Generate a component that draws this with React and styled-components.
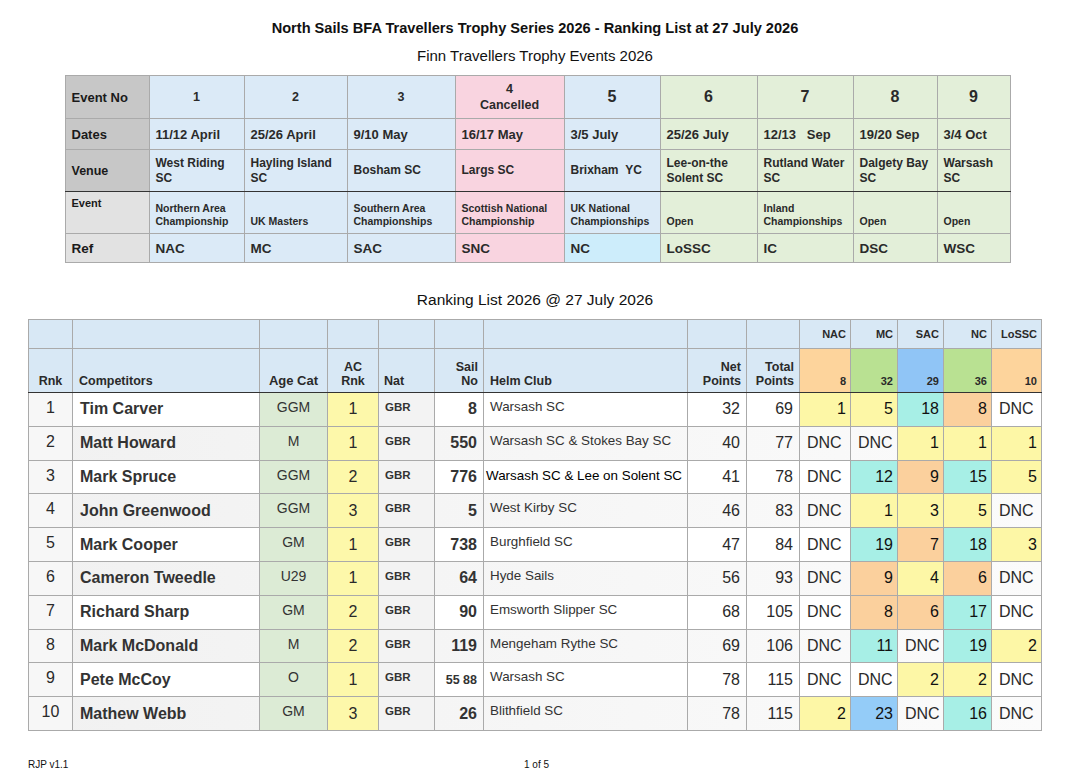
import React from 'react';
import styled, { createGlobalStyle } from 'styled-components';

const GlobalStyle = createGlobalStyle`
  html, body {
    margin: 0;
    padding: 0;
    background: #ffffff;
  }
  body {
    font-family: "Liberation Sans", Arial, Helvetica, sans-serif;
    color: #222;
  }
`;

const events = [
  { no: '1', big: false, date: '11/12 April', venue: 'West Riding SC', event: 'Northern Area Championship', ref: 'NAC', bg: '#dbeaf7' },
  { no: '2', big: false, date: '25/26 April', venue: 'Hayling Island SC', event: 'UK Masters', ref: 'MC', bg: '#dbeaf7' },
  { no: '3', big: false, date: '9/10 May', venue: 'Bosham SC', event: 'Southern Area Championships', ref: 'SAC', bg: '#dbeaf7' },
  { no: '4', cancelled: true, big: false, date: '16/17 May', venue: 'Largs SC', event: 'Scottish National Championship', ref: 'SNC', bg: '#f9d4e0' },
  { no: '5', big: true, date: '3/5 July', venue: 'Brixham\u00a0\u00a0YC', event: 'UK National Championships', ref: 'NC', bg: '#dbeaf7', refBg: '#cdedfb' },
  { no: '6', big: true, date: '25/26 July', venue: 'Lee-on-the Solent SC', event: 'Open', ref: 'LoSSC', bg: '#e3efd9' },
  { no: '7', big: true, date: '12/13\u00a0\u00a0\u00a0Sep', venue: 'Rutland Water SC', event: 'Inland Championships', ref: 'IC', bg: '#e3efd9' },
  { no: '8', big: true, date: '19/20 Sep', venue: 'Dalgety Bay SC', event: 'Open', ref: 'DSC', bg: '#e3efd9' },
  { no: '9', big: true, date: '3/4 Oct', venue: 'Warsash SC', event: 'Open', ref: 'WSC', bg: '#e3efd9' },
];

const eventCols = [84, 95, 103, 108, 109, 96, 97, 96, 84, 73];

const Y = '#fdf7a6';
const T = '#a7efe6';
const O = '#fbd09d';
const B = '#94ccf8';

const scoreHeads = [
  { ref: 'NAC', pts: '8', bg: '#fdd49c' },
  { ref: 'MC', pts: '32', bg: '#b9e192' },
  { ref: 'SAC', pts: '29', bg: '#90c5f6' },
  { ref: 'NC', pts: '36', bg: '#b9e192' },
  { ref: 'LoSSC', pts: '10', bg: '#fdd49c' },
];

const competitors = [
  { rnk: 1, name: 'Tim Carver', age: 'GGM', ac: 1, sail: '8', club: 'Warsash SC', net: 32, total: 69, scores: [[1, Y], [5, Y], [18, T], [8, O], ['DNC']] },
  { rnk: 2, name: 'Matt Howard', age: 'M', ac: 1, sail: '550', club: 'Warsash SC & Stokes Bay SC', net: 40, total: 77, scores: [['DNC'], ['DNC'], [1, Y], [1, Y], [1, Y]] },
  { rnk: 3, name: 'Mark Spruce', age: 'GGM', ac: 2, sail: '776', club: 'Warsash SC & Lee on Solent SC', wide: true, net: 41, total: 78, scores: [['DNC'], [12, T], [9, O], [15, T], [5, Y]] },
  { rnk: 4, name: 'John Greenwood', age: 'GGM', ac: 3, sail: '5', club: 'West Kirby SC', net: 46, total: 83, scores: [['DNC'], [1, Y], [3, Y], [5, Y], ['DNC']] },
  { rnk: 5, name: 'Mark Cooper', age: 'GM', ac: 1, sail: '738', club: 'Burghfield SC', net: 47, total: 84, scores: [['DNC'], [19, T], [7, O], [18, T], [3, Y]] },
  { rnk: 6, name: 'Cameron Tweedle', age: 'U29', ac: 1, sail: '64', club: 'Hyde Sails', net: 56, total: 93, scores: [['DNC'], [9, O], [4, Y], [6, O], ['DNC']] },
  { rnk: 7, name: 'Richard Sharp', age: 'GM', ac: 2, sail: '90', club: 'Emsworth Slipper SC', net: 68, total: 105, scores: [['DNC'], [8, O], [6, O], [17, T], ['DNC']] },
  { rnk: 8, name: 'Mark McDonald', age: 'M', ac: 2, sail: '119', club: 'Mengeham Rythe SC', net: 69, total: 106, scores: [['DNC'], [11, T], ['DNC'], [19, T], [2, Y]] },
  { rnk: 9, name: 'Pete McCoy', age: 'O', ac: 1, sail: '55 88', small: true, club: 'Warsash SC', net: 78, total: 115, scores: [['DNC'], ['DNC'], [2, Y], [2, Y], ['DNC']] },
  { rnk: 10, name: 'Mathew Webb', age: 'GM', ac: 3, sail: '26', club: 'Blithfield SC', net: 78, total: 115, scores: [[2, Y], [23, B], ['DNC'], [16, T], ['DNC']] },
];

const rankCols = [44, 187, 68, 51, 56, 49, 204, 59, 53, 51, 47, 46, 48, 50];

const Page = styled.div`
  width: 1070px;
  height: 776px;
  box-sizing: border-box;
  padding-top: 19px;
  display: flex;
  flex-direction: column;
  align-items: center;
  position: relative;
`;

const Title = styled.h1`
  margin: 0;
  font-size: 14.6px;
  font-weight: 700;
  color: #111;
  line-height: 18px;
`;

const Subtitle = styled.h2`
  margin: 10px 0 0;
  font-size: 15px;
  font-weight: 400;
  color: #111;
  line-height: 18px;
`;

const EventsTable = styled.table`
  margin-top: 10px;
  margin-left: 5px;
  border-collapse: collapse;
  table-layout: fixed;
  width: 945px;
`;

const ERow = styled.tr`
  height: ${p => p.$h}px;
  border-bottom: 1px solid ${p => (p.$dark ? '#333' : '#aaa')};
`;

const ELabel = styled.th`
  background: ${p => (p.$light ? '#e2e2e2' : '#c7c7c7')};
  border: 1px solid #aaa;
  border-bottom-color: inherit;
  text-align: left;
  vertical-align: ${p => p.$valign || 'middle'};
  padding: ${p => (p.$valign === 'top' ? '5px 6px 0' : '0 6px')};
  font-size: ${p => p.$size || 13}px;
  font-weight: 700;
  color: #1a1a1a;
`;

const ECell = styled.td`
  background: ${p => p.$bg};
  border: 1px solid #aaa;
  border-bottom-color: inherit;
  text-align: ${p => (p.$center ? 'center' : 'left')};
  vertical-align: ${p => p.$valign || 'middle'};
  padding: ${p => p.$pad || '0 6px'};
  font-size: ${p => p.$size}px;
  font-weight: 700;
  line-height: ${p => p.$lh || 'normal'};
  color: #2a2a2a;
`;

const SectionTitle = styled.h3`
  margin: 28px 0 0;
  font-size: 15.5px;
  font-weight: 400;
  color: #111;
  line-height: 18px;
`;

const RankTable = styled.table`
  margin-top: 10px;
  margin-left: 0;
  border-collapse: collapse;
  table-layout: fixed;
  width: 1013px;
`;

const HeadRow = styled.tr`
  height: ${p => p.$h}px;
  border-bottom: 1px solid ${p => (p.$dark ? '#333' : '#aaa')};
`;

const HeadCell = styled.th`
  background: ${p => p.$bg || '#d8e8f5'};
  border: 1px solid #aaa;
  border-bottom-color: inherit;
  text-align: ${p => p.$align || 'left'};
  vertical-align: ${p => p.$valign || 'bottom'};
  padding: ${p => p.$pad || '0 5px 4px'};
  font-size: ${p => p.$size || 12.5}px;
  font-weight: 700;
  line-height: 14px;
  color: #2a2a2a;
  white-space: nowrap;
`;

const BodyRow = styled.tr`
  height: 33.8px;
  background: ${p => (p.$alt ? 'linear-gradient(90deg, #f1f1f1, #fbfbfb)' : '#ffffff')};
`;

const BodyCell = styled.td`
  background: ${p => p.$bg || 'transparent'};
  border: 1px solid #aaa;
  ${p => p.$darkLeft && 'border-left: 1px solid #333;'}
  text-align: ${p => p.$align || 'left'};
  vertical-align: ${p => p.$valign || 'middle'};
  padding: ${p => p.$pad || '0 5px'};
  font-size: ${p => p.$size || 16}px;
  font-weight: ${p => (p.$bold ? 700 : 400)};
  color: ${p => p.$color || '#2a2a2a'};
  white-space: nowrap;
  overflow: visible;
`;

const Footer = styled.div`
  position: absolute;
  left: 28px;
  right: 0;
  top: 759px;
  font-size: 10px;
  color: #111;
  display: grid;
  grid-template-columns: 496px auto;
`;

const EventNo = ({ e }) =>
  e.cancelled ? (
    <ECell $bg={e.bg} $center $size={12.5} $lh="16px">4<br />Cancelled</ECell>
  ) : (
    <ECell $bg={e.bg} $center $size={e.big ? 16 : 12.5}>{e.no}</ECell>
  );

const App = () => (
  <>
    <GlobalStyle />
    <Page>
      <Title>North Sails BFA Travellers Trophy Series 2026 - Ranking List at 27 July 2026</Title>
      <Subtitle>Finn Travellers Trophy Events 2026</Subtitle>

      <EventsTable>
        <colgroup>
          {eventCols.map((w, i) => <col key={i} style={{ width: w }} />)}
        </colgroup>
        <tbody>
          <ERow $h={43}>
            <ELabel $size={13}>Event No</ELabel>
            {events.map(e => <EventNo key={e.no} e={e} />)}
          </ERow>
          <ERow $h={31}>
            <ELabel $size={13}>Dates</ELabel>
            {events.map(e => <ECell key={e.no} $bg={e.bg} $size={13}>{e.date}</ECell>)}
          </ERow>
          <ERow $h={42} $dark>
            <ELabel $size={12.5}>Venue</ELabel>
            {events.map(e => <ECell key={e.no} $bg={e.bg} $size={12} $lh="15px">{e.venue}</ECell>)}
          </ERow>
          <ERow $h={42}>
            <ELabel $light $size={11} $valign="top">Event</ELabel>
            {events.map(e => (
              <ECell key={e.no} $bg={e.bg} $size={10.5} $lh="13px" $valign="bottom" $pad="0 6px 5px">{e.event}</ECell>
            ))}
          </ERow>
          <ERow $h={29}>
            <ELabel $light $size={13.5}>Ref</ELabel>
            {events.map(e => <ECell key={e.no} $bg={e.refBg || e.bg} $size={13.5}>{e.ref}</ECell>)}
          </ERow>
        </tbody>
      </EventsTable>

      <SectionTitle>Ranking List 2026 @ 27 July 2026</SectionTitle>

      <RankTable>
        <colgroup>
          {rankCols.map((w, i) => <col key={i} style={{ width: w }} />)}
        </colgroup>
        <thead>
          <HeadRow $h={29}>
            {Array.from({ length: 9 }).map((_, i) => <HeadCell key={i} />)}
            {scoreHeads.map(s => (
              <HeadCell key={s.ref} $align="right" $valign="middle" $size={11} $pad="0 4px">{s.ref}</HeadCell>
            ))}
          </HeadRow>
          <HeadRow $h={44} $dark>
            <HeadCell $align="center">Rnk</HeadCell>
            <HeadCell $pad="0 6px 4px">Competitors</HeadCell>
            <HeadCell $align="center" $size={13}>Age Cat</HeadCell>
            <HeadCell $align="center">AC<br />Rnk</HeadCell>
            <HeadCell>Nat</HeadCell>
            <HeadCell $align="right">Sail<br />No</HeadCell>
            <HeadCell $pad="0 6px 4px">Helm Club</HeadCell>
            <HeadCell $align="right">Net<br />Points</HeadCell>
            <HeadCell $align="right">Total<br />Points</HeadCell>
            {scoreHeads.map(s => (
              <HeadCell key={s.ref} $bg={s.bg} $align="right" $size={11} $pad="0 4px 4px">{s.pts}</HeadCell>
            ))}
          </HeadRow>
        </thead>
        <tbody>
          {competitors.map((c, i) => (
            <BodyRow key={c.rnk} $alt={i % 2 === 1}>
              <BodyCell $align="center" $bg="#f7f7f7" $valign="top" $pad="6px 0 0">{c.rnk}</BodyCell>
              <BodyCell $bold $pad="0 7px" $color="#333">{c.name}</BodyCell>
              <BodyCell $align="center" $bg="#dcebd5" $size={14} $valign="top" $pad="6px 0 0" $color="#333">{c.age}</BodyCell>
              <BodyCell $align="center" $bg="#fdf8aa">{c.ac}</BodyCell>
              <BodyCell $bg="#f3f3f3" $bold $size={11.5} $valign="top" $pad="8px 6px 0" $color="#333">GBR</BodyCell>
              <BodyCell $darkLeft $align="right" $bold $size={c.small ? 12.5 : 16} $pad="0 6px 0 0" $color="#333">{c.sail}</BodyCell>
              <BodyCell
                $size={c.wide ? 13.4 : 13.4}
                $color={c.wide ? '#000' : '#333'}
                $valign="top"
                $pad={c.wide ? '7px 2px 0' : '6px 6px 0'}
              >
                {c.club}
              </BodyCell>
              <BodyCell $align="right" $pad="0 6px 0 0">{c.net}</BodyCell>
              <BodyCell $align="right" $pad="0 6px 0 0">{c.total}</BodyCell>
              {c.scores.map(([v, bg], j) =>
                v === 'DNC' ? (
                  <BodyCell key={j} $pad="0 0 0 7px">DNC</BodyCell>
                ) : (
                  <BodyCell key={j} $bg={bg} $align="right" $pad="0 4px 0 0" $color="#111">{v}</BodyCell>
                )
              )}
            </BodyRow>
          ))}
        </tbody>
      </RankTable>

      <Footer>
        <span>RJP v1.1</span>
        <span>1 of 5</span>
      </Footer>
    </Page>
  </>
);

export default App;
